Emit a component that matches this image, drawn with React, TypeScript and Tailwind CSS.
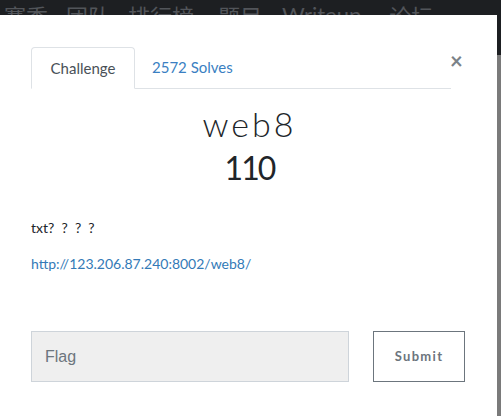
import React from "react";

export default function App() {
  return (
    <div className="w-[501px] h-[416px] bg-[#1d1f22] overflow-hidden flex flex-col" style={{ fontFamily: "Lato, 'Noto Sans', sans-serif" }}>
      <div className="h-[15px] shrink-0 overflow-hidden relative">
        <div
          className="absolute left-[-18px] top-[2px] flex whitespace-nowrap text-[22px] leading-[26px] text-[#52555a]"
          style={{ fontFamily: "'Noto Sans CJK SC', 'Noto Sans', sans-serif" }}
        >
          <span>一赛季</span>
          <span className="ml-[18px]">团队</span>
          <span className="ml-[18px]">排行榜</span>
          <span className="ml-[24px]">题目</span>
          <span className="ml-[20px]" style={{ fontFamily: "Lato, sans-serif" }}>Writeup</span>
          <span className="ml-[28px]">论坛</span>
        </div>
      </div>
      <div className="flex flex-1">
        <div className="w-[497px] bg-white relative pl-[31px] pr-[32px] pt-[32px]">
          <button className="absolute left-[450px] top-[35px] text-[22px] leading-[22px] font-bold text-[#7b8288]">×</button>
          <div className="flex w-[420px] border-b border-[#dee2e6] text-[15px]">
            <div className="w-[104px] h-[42px] -mb-px border border-[#dee2e6] border-b-white rounded-t-[4px] bg-white flex items-center justify-center text-[#495057]">
              Challenge
            </div>
            <div className="h-[41px] px-[17px] flex items-center text-[#3a7fc2]">2572 Solves</div>
          </div>
          <div className="flex flex-col items-center -ml-[31px] -mr-[32px] pl-[2px]">
            <div className="mt-[15px] text-[34px] leading-[40px] font-light tracking-[0.09em] text-[#212529]">web8</div>
            <div className="mt-[4px] text-[32px] leading-[40px] tracking-[-0.06em] text-[#212529]">110</div>
          </div>
          <div className="mt-[30px] text-[14px] leading-[20px] text-[#212529] whitespace-pre">{"txt?  ?  ?  ?"}</div>
          <div className="mt-[16px] text-[14px] leading-[20px] text-[#337ab7]">http://123.206.87.240:8002/web8/</div>
          <div className="mt-[57px] flex gap-[24px]">
            <div
              className="w-[318px] h-[51px] bg-[#efefef] border border-[#ced4da] flex items-center pl-[13px] text-[16px] text-[#6c757d]"
              style={{ fontFamily: "'Liberation Sans', Arial, sans-serif" }}
            >
              Flag
            </div>
            <button className="w-[92px] h-[51px] border border-[#6c757d] bg-white text-[13px] font-bold tracking-[0.1em] text-[#6c757d]">
              Submit
            </button>
          </div>
        </div>
        <div className="w-[4px] flex flex-col">
          <div className="h-[40px] bg-[#1d1f22]"></div>
          <div className="flex-1 bg-[#7a7a7a]"></div>
        </div>
      </div>
    </div>
  );
}
